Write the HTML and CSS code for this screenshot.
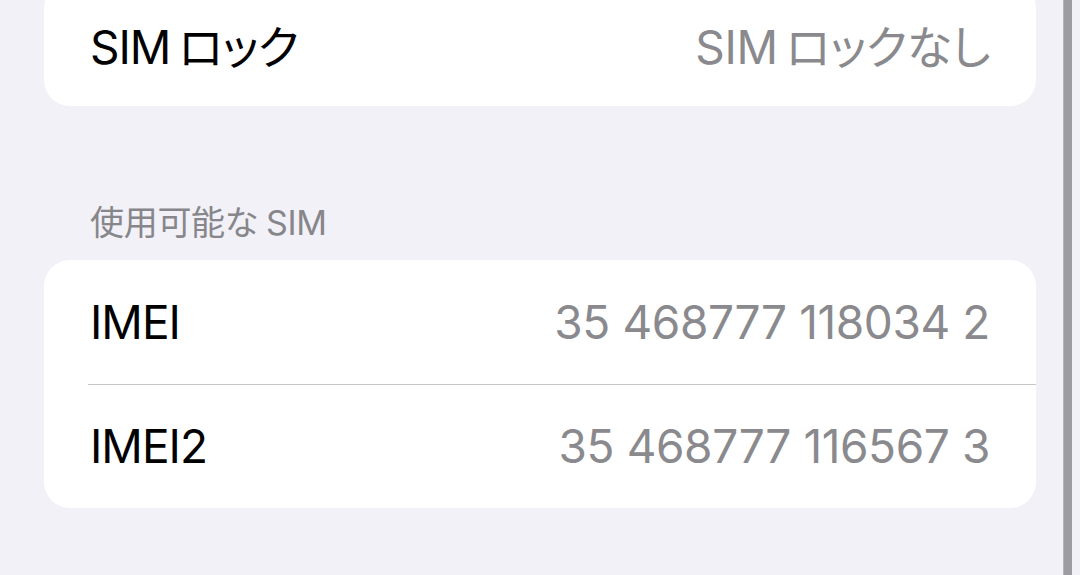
FILE: index.html
```html
<!DOCTYPE html>
<html lang="ja">
<head>
    <meta charset="UTF-8">
    <meta name="viewport" content="width=device-width, initial-scale=1.0">
    <title>情報</title>
    <link rel="stylesheet" href="styles.css">
</head>
<body>
<div class="screen">
    <div class="group group-top">
        <div class="row">
            <span class="row-label"><span class="latin">SIM</span>ロック</span>
            <span class="row-value"><span class="latin">SIM</span>ロックなし</span>
        </div>
    </div>

    <h3 class="section-title">使用可能な<span class="latin-after">SIM</span></h3>
    <div class="group">
        <div class="row">
            <span class="row-label">IMEI</span>
            <span class="row-value">35 468777 118034 2</span>
        </div>
        <div class="row">
            <span class="row-label">IMEI2</span>
            <span class="row-value">35 468777 116567 3</span>
        </div>
    </div>

    <div class="edge"></div>
</div>
</body>
</html>
```

FILE: styles.css
```css
body {
    margin: 0;
    background-color: #f2f1f7;
    font-family: Inter, "Noto Sans CJK JP", sans-serif;
    -webkit-font-smoothing: antialiased;
}

.screen {
    position: relative;
    width: 1080px;
    height: 575px;
    overflow: hidden;
    padding: 0 44px;
    box-sizing: border-box;
}

.group {
    background-color: #fff;
    border-radius: 26px;
    overflow: hidden;
}

.group-top {
    margin-top: -18px;
}

.row {
    position: relative;
    display: flex;
    justify-content: space-between;
    align-items: center;
    height: 124px;
    padding: 0 46px 0 46px;
    font-size: 46px;
    font-feature-settings: "palt";
}

/* hairline between rows, inset like the label */
.row + .row::before {
    content: "";
    position: absolute;
    top: 0;
    left: 44px;
    right: 0;
    height: 1px;
    background-color: #c6c6c8;
}

.row-label {
    color: #000;
    letter-spacing: -1px;
}

.row-value {
    color: #8a8a8e;
    letter-spacing: -0.4px;
}

/* a little air between latin and kana */
.latin {
    margin-right: 8px;
}

.latin-after {
    margin-left: 8px;
}

.section-title {
    margin: 0;
    padding: 97px 0 17px 46px;
    font-size: 34px;
    font-weight: normal;
    line-height: 40px;
    color: #86868b;
    letter-spacing: -0.3px;
    font-feature-settings: "palt";
}

.edge {
    position: absolute;
    top: 0;
    bottom: 0;
    left: 1063px;
    width: 8px;
    background-color: #9d9ca2;
    border-left: 1px solid #b5b4ba;
}
```
